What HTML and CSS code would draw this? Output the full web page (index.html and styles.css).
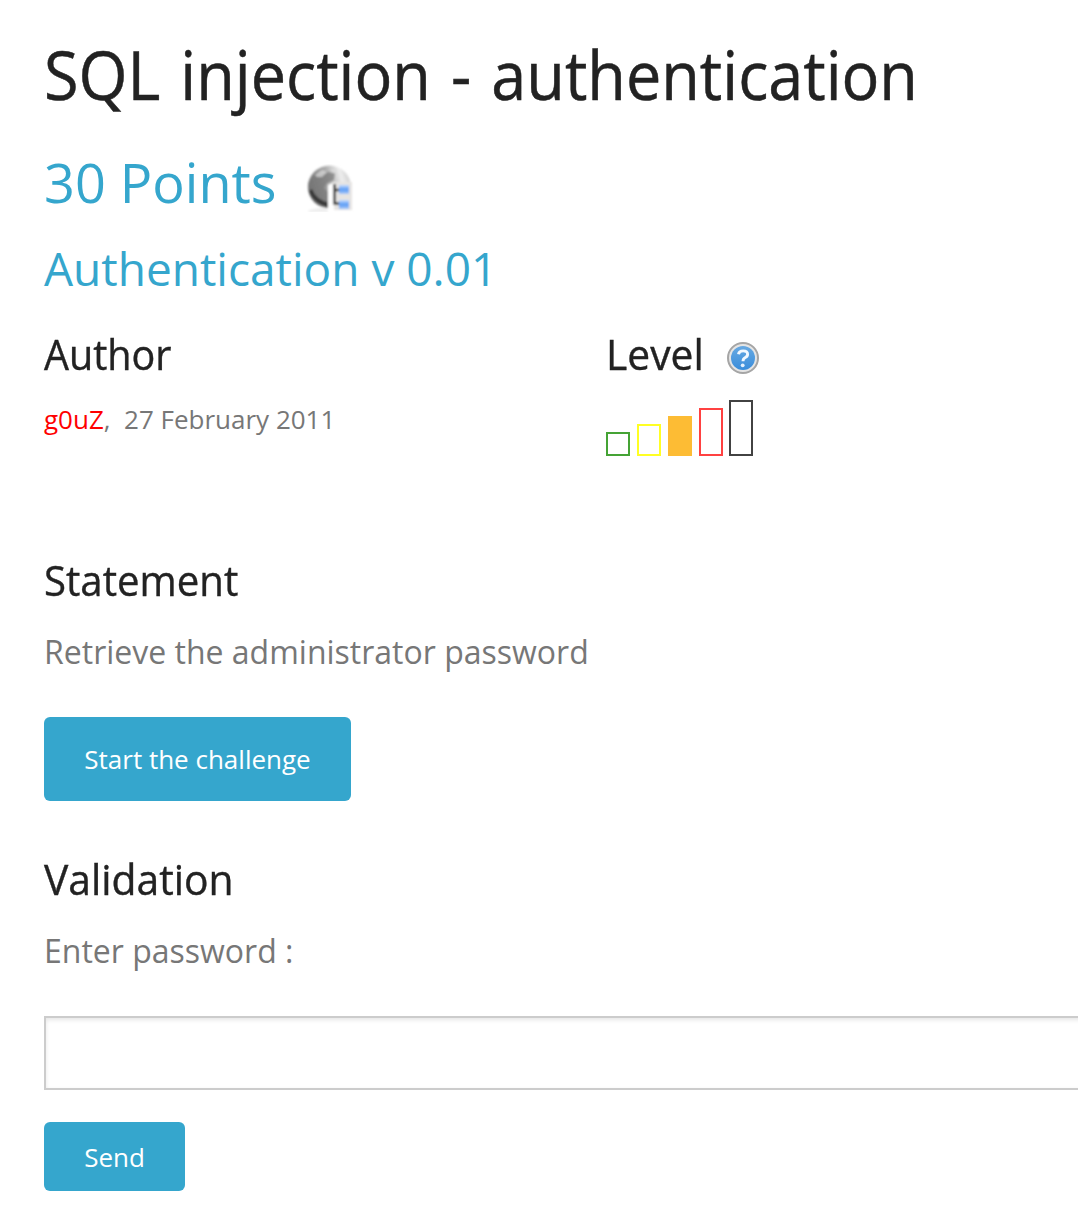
FILE: index.html
```html
<!DOCTYPE html>
<html lang="en">
<head>
<meta charset="utf-8">
<title>SQL injection - authentication</title>
<link rel="stylesheet" href="styles.css">
</head>
<body>
<main class="challenge">
  <h1 class="title">SQL injection - authentication</h1>
  <h2 class="points"><span>30 Points</span>
    <svg class="globe" viewBox="0 0 48 48" aria-hidden="true">
      <defs>
        <linearGradient id="sphere" x1="0" y1=".6" x2="1" y2=".3"><stop offset="0" stop-color="#6a6a6a"/><stop offset=".5" stop-color="#aaa"/><stop offset=".8" stop-color="#eee"/><stop offset="1" stop-color="#ccc"/></linearGradient>
        <linearGradient id="node" x2="0" y2="1"><stop offset="0" stop-color="#c3dcff"/><stop offset=".5" stop-color="#5b9cf5"/><stop offset="1" stop-color="#a9c9f8"/></linearGradient>
        <filter id="soft" x="-10%" y="-10%" width="120%" height="120%"><feGaussianBlur stdDeviation=".9"/></filter>
      </defs>
      <g filter="url(#soft)">
        <path d="M3 46Q22 41 22 48H2Z" fill="#eee"/>
        <circle cx="23.500" cy="23" r="21.500" fill="url(#sphere)"/>
        <path d="M3 17Q9 8 18 10L22 8L29 9L28 16L21 19L18 24L22 28L24 43Q10 42 4 31Q1 24 3 17Z" fill="#777" opacity=".7"/>
        <path d="M3 27Q7 40 24 44V39Q10 36 6 25Z" fill="#222" opacity=".75"/>
        <path d="M9 11L16 6L21 8L16 13L11 13ZM24 5L30 5L32 10L26 9Z" fill="#ddd" opacity=".7"/>
        <path d="M22 21L28 18H46V46H22Z" fill="#e6e4e2"/>
        <path d="M22 21L28 19V46H22Z" fill="#fff"/>
        <path d="M28.500 20V39.500H34M28.500 26H34" fill="none" stroke="#333" stroke-width="2.600"/>
        <rect x="33" y="21" width="10" height="9" fill="url(#node)"/>
        <rect x="33" y="36" width="10" height="9" fill="url(#node)"/>
      </g>
    </svg>
  </h2>
  <h3 class="subtitle">Authentication v 0.01</h3>
  <div class="meta">
    <section>
      <h4 class="heading"><span class="h-author">Author</span></h4>
      <p class="byline"><a class="author">g0uZ</a>,&nbsp; 27 February 2011</p>
    </section>
    <section>
      <h4 class="heading"><span class="h-level">Level</span>
        <svg class="help" viewBox="0 0 32 32" aria-hidden="true">
          <defs><linearGradient id="blue" x2="0" y2="1"><stop offset="0" stop-color="#67a9e2"/><stop offset="1" stop-color="#3a8ddb"/></linearGradient></defs>
          <circle cx="16" cy="16" r="15" fill="#e5e5e5" stroke="#a5a5a5" stroke-width="2"/>
          <circle cx="16" cy="16" r="12" fill="url(#blue)"/>
          <path d="M11.500 12.200Q12 8.900 16.200 8.900Q20.600 8.900 20.600 12.200Q20.600 14.300 18.300 15.500Q16 16.700 16 19.200" fill="none" stroke="#f2f8ff" stroke-width="2.900"/>
          <circle cx="15.700" cy="23.300" r="1.900" fill="#e4f0fc"/>
        </svg>
      </h4>
      <div class="bars"><i class="bar b1"></i><i class="bar b2"></i><i class="bar b3"></i><i class="bar b4"></i><i class="bar b5"></i></div>
    </section>
  </div>
  <h4 class="heading"><span class="h-statement">Statement</span></h4>
  <p class="text">Retrieve the administrator password</p>
  <a class="button start">Start the challenge</a>
  <h4 class="heading"><span class="h-validation">Validation</span></h4>
  <label class="text" for="pw">Enter password :</label>
  <input class="field" id="pw" type="text">
  <button class="button send">Send</button>
</main>
</body>
</html>
```
FILE: styles.css
```css
* { box-sizing: border-box; }
html { overflow: hidden; }
body { margin: 0; background: #fff; overflow: hidden; font-family: "Open Sans", sans-serif; color: #777; }
h1, h2, h3, h4, p { margin: 0; font-weight: 400; white-space: nowrap; }
.challenge { padding: 34px 0 0 44px; display: flex; flex-direction: column; align-items: flex-start; height: 1218px; overflow: hidden; }
.title { font-size: 67px; line-height: 80px; color: #222; word-spacing: 4px; transform: scaleX(.939); transform-origin: 0 0; -webkit-text-stroke: .5px #222; }
.points { display: flex; align-items: flex-start; gap: 30px; margin-top: 30px; font-size: 54px; line-height: 76px; color: #35a6cd; }
.globe { width: 48px; height: 48px; margin-top: 20px; }
.subtitle { margin-top: 16px; font-size: 46px; line-height: 64px; color: #35a6cd; }
.meta { display: grid; grid-template-columns: 562px 400px; margin-top: 23px; height: 226px; }
.heading { display: flex; align-items: flex-start; font-size: 42.5px; line-height: 60px; color: #222; }
.heading span { padding-top: 1px; height: 60px; transform-origin: 0 0; -webkit-text-stroke: .4px #222; }
.byline { margin-top: 16px; font-size: 26px; line-height: 40px; }
.author { color: #f00; }
.h-author { transform: scaleX(.93); }
.h-level { width: 121px; transform: scaleX(.96); }
.h-statement { transform: scaleX(.945); }
.h-validation { transform: scaleX(.96); }
.help { width: 32px; height: 32px; margin-top: 19px; }
.bars { display: flex; align-items: flex-end; gap: 7px; margin-top: 17px; height: 56px; }
.bar { width: 24px; border: 2px solid; }
.b1 { height: 24px; color: #45a335; }
.b2 { height: 32px; color: #ffff24; }
.b3 { height: 40px; color: #fdbc34; background: #fdbc34; }
.b4 { height: 48px; color: #ff4141; }
.b5 { height: 56px; color: #424242; margin-left: -1px; }
.text { margin-top: 18px; font-size: 32px; line-height: 50px; }
.button { display: flex; align-items: center; justify-content: center; border: 0; border-radius: 6px; background: #35a6cd; color: #fff; font: 26px/36px "Open Sans", sans-serif; white-space: nowrap; }
.start { width: 307px; height: 84px; margin: 40px 0 47px; }
.field { flex: none; width: 1120px; height: 74px; margin: 40px 0 32px; padding: 0 16px; border: 2px solid #ccc; border-radius: 0; background: #fff; box-shadow: inset 0 2px 4px rgba(0, 0, 0, .1); font: 28px "Open Sans", sans-serif; outline: 0; }
.send { width: 141px; height: 69px; }
```
